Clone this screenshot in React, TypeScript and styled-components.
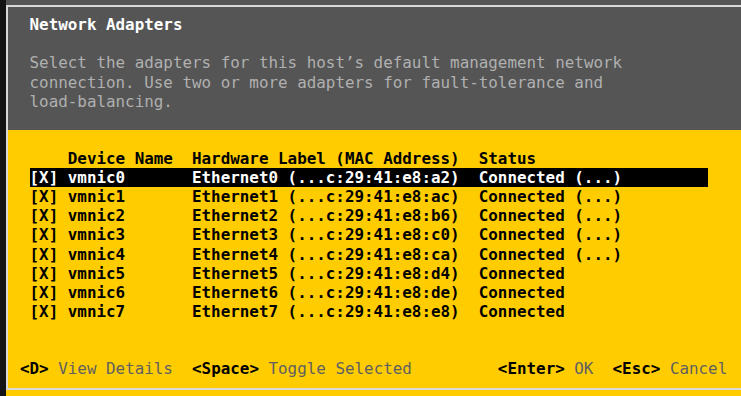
import { FunctionComponent } from 'react';
import styled, { createGlobalStyle, css } from 'styled-components';

const GlobalStyle = createGlobalStyle`
  html, body {
    margin: 0;
    padding: 0;
    background: #555555;
  }

  body {
    overflow: hidden;
  }
`;

const Screen = styled.div`
  display: flex;
  width: 741px;
  height: 396px;
  overflow: hidden;
  font-family: "DejaVu Sans Mono", "Liberation Mono", monospace;
  font-size: 15.88px;
  line-height: 19.2px;
`;

const EdgeStrip = styled.div`
  flex: none;
  width: 6px;
  background: #141414;
`;

const Stage = styled.div`
  flex: 1;
  display: flex;
  padding: 5px 0 6px;
  background: linear-gradient(to bottom, #555555 130px, #ffcc00 130px);
`;

const Frame = styled.div`
  flex: 1;
  display: flex;
  flex-direction: column;
  border: 2px solid #d9d9d9;
  border-right: none;
`;

const HeaderPanel = styled.div`
  flex: none;
  height: 123px;
  box-sizing: border-box;
  padding: 8px 0 0 12px;
  background: #555555;
`;

const Title = styled.div`
  margin-left: 1ch;
  margin-bottom: 19.2px;
  color: #ffffff;
  font-weight: bold;
`;

const Description = styled.div`
  margin-left: 1ch;
  color: #b0b0b0;
`;

const DescriptionLine = styled.div`
  white-space: pre;
`;

const BodyPanel = styled.div`
  flex: 1;
  display: flex;
  flex-direction: column;
  box-sizing: border-box;
  padding: 18.6px 0 9.4px 12px;
  background: #ffcc00;
`;

const Table = styled.div`
  margin-left: 1ch;
  display: flex;
  flex-direction: column;
`;

const Row = styled.div<{ selected?: boolean }>`
  display: flex;
  width: 71ch;
  height: 19.2px;
  color: #000000;
  font-weight: bold;

  ${({ selected }) => {
    if (selected) {
      return css`
        background: #000000;
        color: #ffffff;
      `;
    }

    return '';
  }}
`;

const Cell = styled.span<{ width?: number }>`
  flex: none;
  white-space: pre;
  ${({ width }) => (width ? css`width: ${width}ch;` : '')}
`;

const Footer = styled.div`
  margin-top: auto;
  display: flex;
  justify-content: space-between;
  width: 74ch;
  white-space: pre;
`;

const ActionGroup = styled.div`
  display: flex;
  gap: 2ch;
`;

const Action = styled.span`
  display: flex;
  gap: 1ch;
`;

const Key = styled.span`
  color: #000000;
  font-weight: bold;
`;

const Label = styled.span`
  color: #606060;
`;

interface Adapter {
  device: string;
  label: string;
  status: string;
}

const DESCRIPTION = [
  'Select the adapters for this host’s default management network',
  'connection. Use two or more adapters for fault-tolerance and',
  'load-balancing.',
];

const ADAPTERS: Adapter[] = [
  { device: 'vmnic0', label: 'Ethernet0 (...c:29:41:e8:a2)', status: 'Connected (...)' },
  { device: 'vmnic1', label: 'Ethernet1 (...c:29:41:e8:ac)', status: 'Connected (...)' },
  { device: 'vmnic2', label: 'Ethernet2 (...c:29:41:e8:b6)', status: 'Connected (...)' },
  { device: 'vmnic3', label: 'Ethernet3 (...c:29:41:e8:c0)', status: 'Connected (...)' },
  { device: 'vmnic4', label: 'Ethernet4 (...c:29:41:e8:ca)', status: 'Connected (...)' },
  { device: 'vmnic5', label: 'Ethernet5 (...c:29:41:e8:d4)', status: 'Connected' },
  { device: 'vmnic6', label: 'Ethernet6 (...c:29:41:e8:de)', status: 'Connected' },
  { device: 'vmnic7', label: 'Ethernet7 (...c:29:41:e8:e8)', status: 'Connected' },
];

const ActionItem: FunctionComponent<{ keyName: string, label: string }> = ({ keyName, label }) => (
  <Action>
    <Key>{`<${keyName}>`}</Key>
    <Label>{label}</Label>
  </Action>
);

const App: FunctionComponent = () => (
  <>
    <GlobalStyle />
    <Screen>
      <EdgeStrip />
      <Stage>
        <Frame>
          <HeaderPanel>
            <Title>Network Adapters</Title>
            <Description>
              {DESCRIPTION.map((line) => (
                <DescriptionLine key={line}>{line}</DescriptionLine>
              ))}
            </Description>
          </HeaderPanel>

          <BodyPanel>
            <Table>
              <Row>
                <Cell width={4} />
                <Cell width={13}>Device Name</Cell>
                <Cell width={30}>Hardware Label (MAC Address)</Cell>
                <Cell>Status</Cell>
              </Row>
              {ADAPTERS.map((adapter, index) => (
                <Row key={adapter.device} selected={index === 0}>
                  <Cell width={4}>[X]</Cell>
                  <Cell width={13}>{adapter.device}</Cell>
                  <Cell width={30}>{adapter.label}</Cell>
                  <Cell>{adapter.status}</Cell>
                </Row>
              ))}
            </Table>

            <Footer>
              <ActionGroup>
                <ActionItem keyName="D" label="View Details" />
                <ActionItem keyName="Space" label="Toggle Selected" />
              </ActionGroup>
              <ActionGroup>
                <ActionItem keyName="Enter" label="OK" />
                <ActionItem keyName="Esc" label="Cancel" />
              </ActionGroup>
            </Footer>
          </BodyPanel>
        </Frame>
      </Stage>
    </Screen>
  </>
);

export default App;
